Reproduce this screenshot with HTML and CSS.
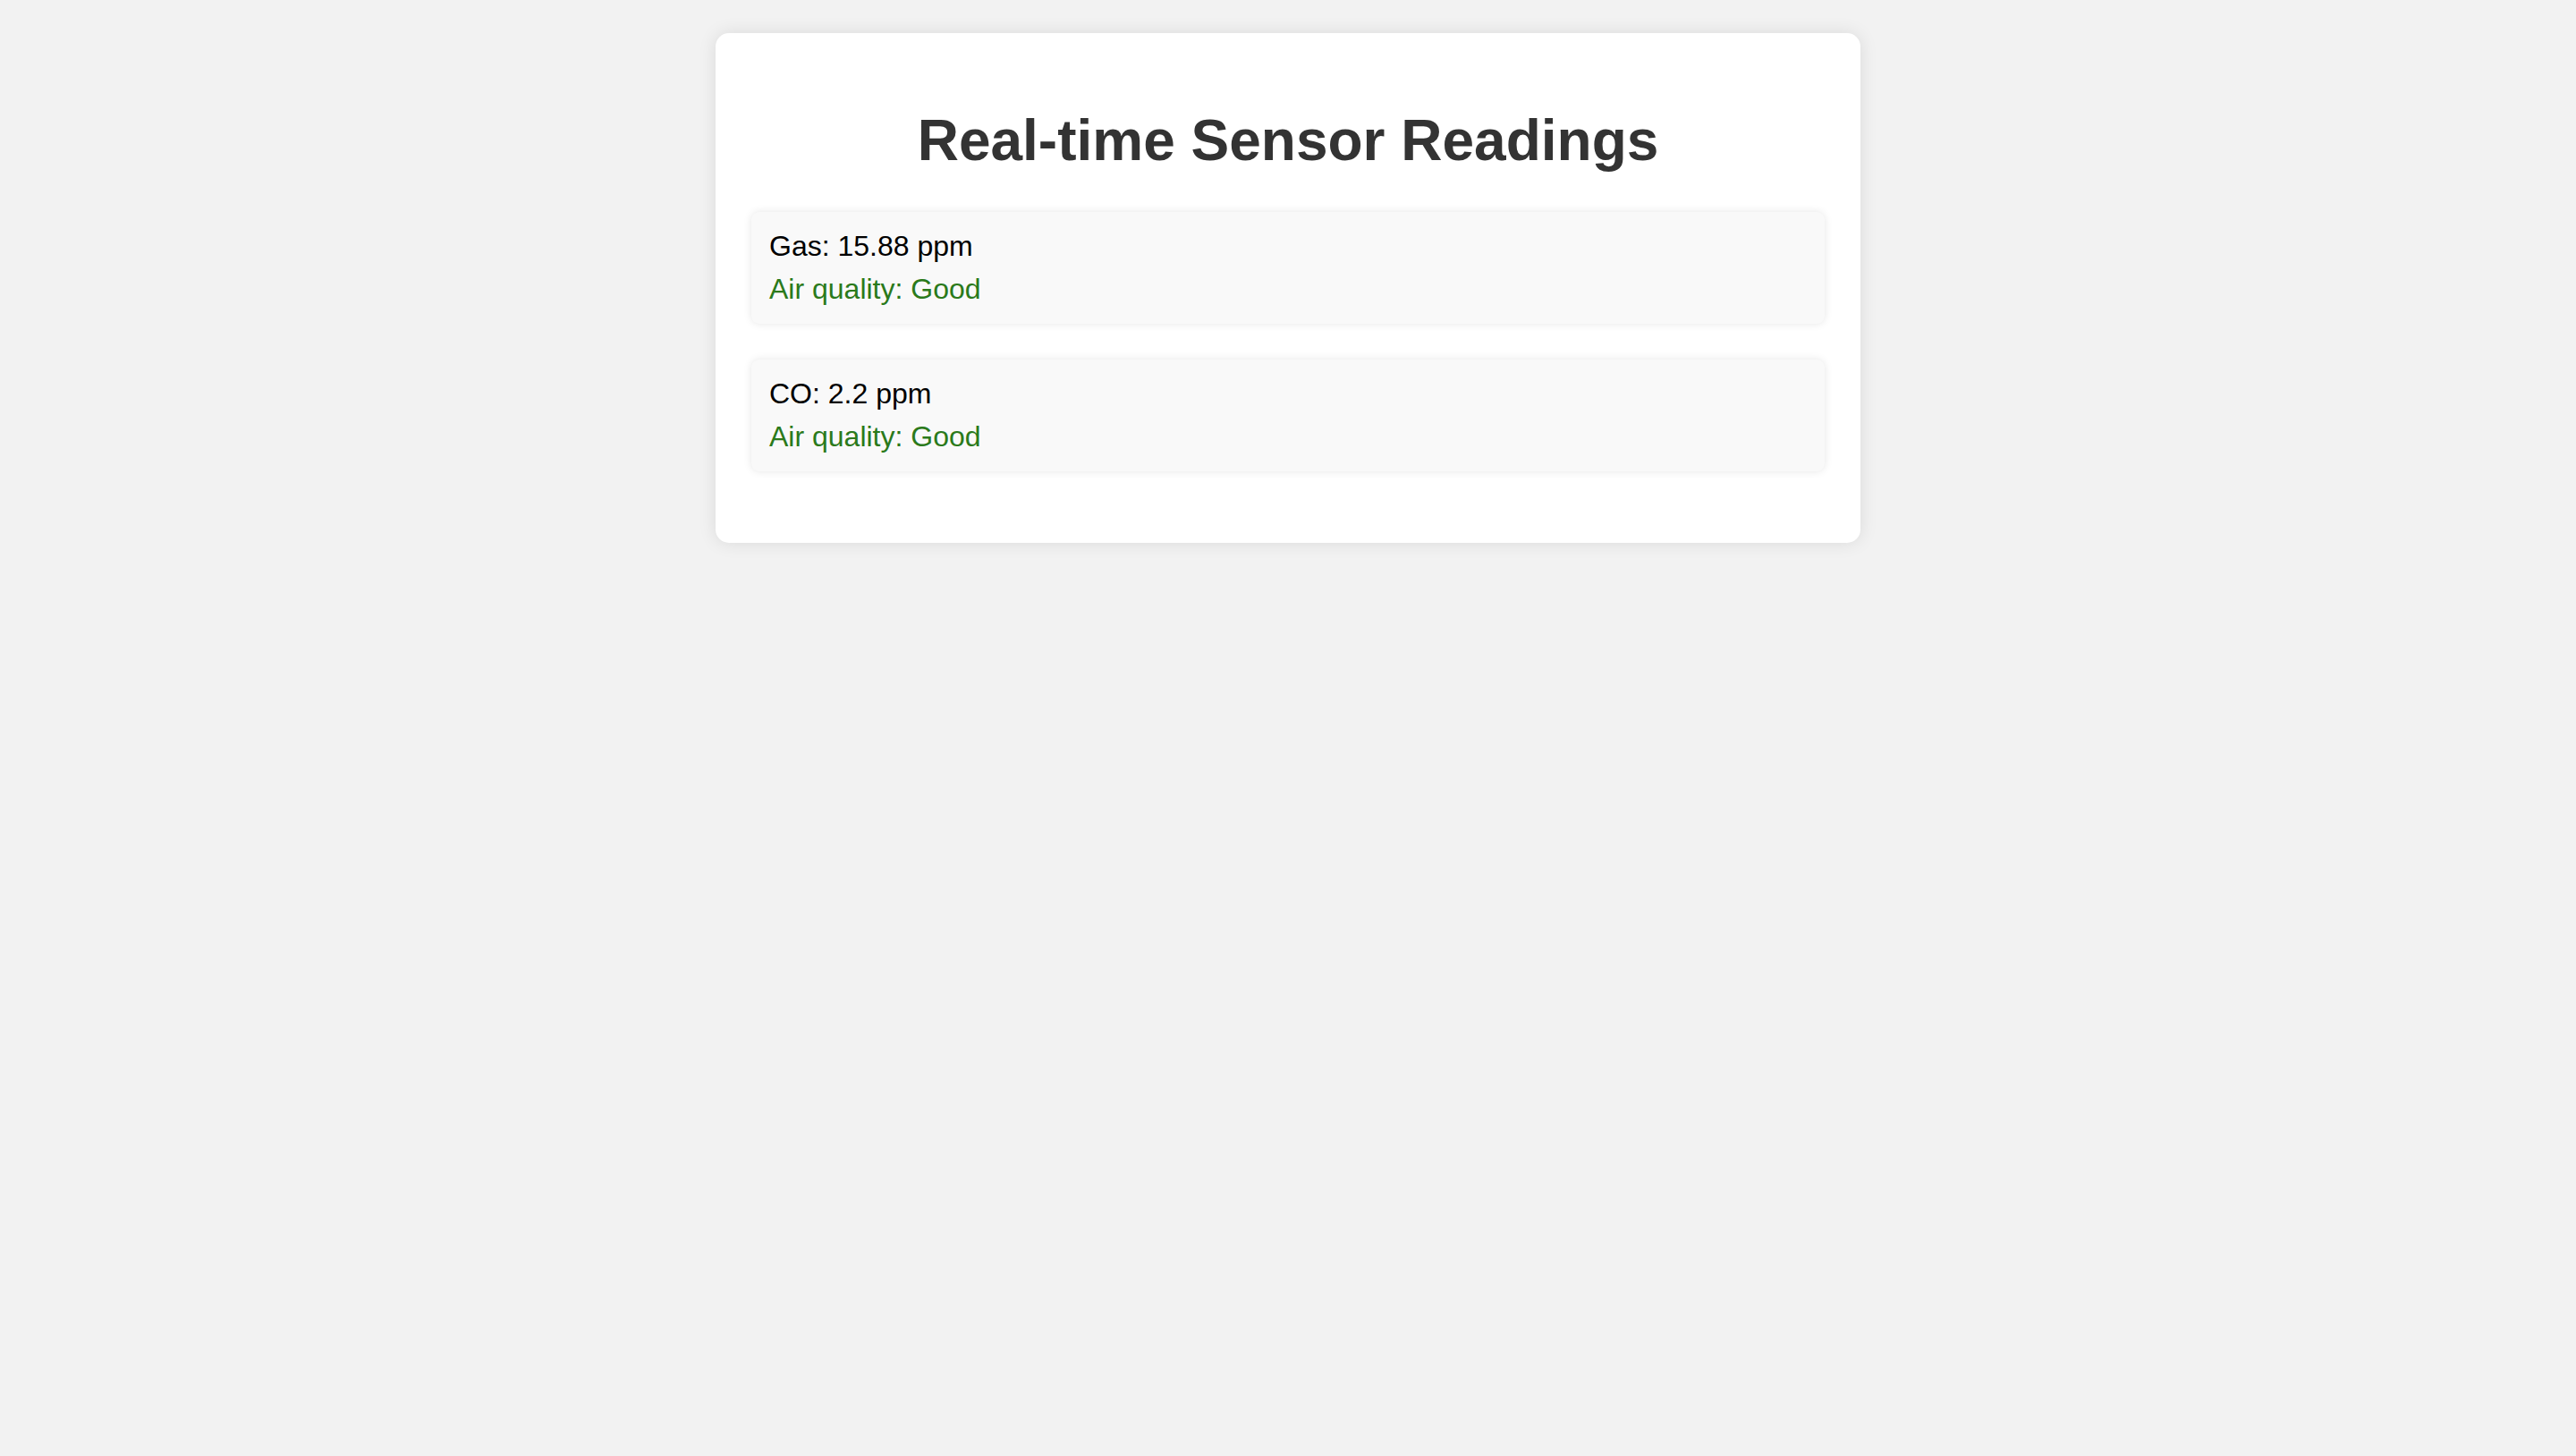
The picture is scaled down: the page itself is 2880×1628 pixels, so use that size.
FILE: index.html
```html
<!DOCTYPE html>
<html lang="en">
<head>
<meta charset="utf-8">
<title>Real-time Sensor Readings</title>
<link rel="stylesheet" href="styles.css">
</head>
<body>
  <main class="card">
    <h1 class="title">Real-time Sensor Readings</h1>
    <section class="reading">
      <p class="value">Gas: 15.88 ppm</p>
      <p class="quality good">Air quality: Good</p>
    </section>
    <section class="reading">
      <p class="value">CO: 2.2 ppm</p>
      <p class="quality good">Air quality: Good</p>
    </section>
  </main>
</body>
</html>
```

FILE: styles.css
```css
html, body {
  margin: 0;
  padding: 0;
}
body {
  background: #f2f2f2;
  font-family: "Liberation Sans", Arial, sans-serif;
  padding-top: 37px;
  min-height: 1628px;
  box-sizing: border-box;
}
.card {
  display: block;
  width: 1200px;
  margin: 0 auto;
  padding: 40px;
  background: #ffffff;
  border-radius: 15px;
  box-shadow: 0 0 20px rgba(0, 0, 0, 0.1);
}
.title {
  margin: 43px 0 43px;
  font-size: 64px;
  line-height: 74px;
  font-weight: bold;
  text-align: center;
  color: #333333;
}
.reading {
  background: #f9f9f9;
  border-radius: 9px;
  padding: 20px;
  margin-bottom: 40px;
  box-shadow: 0 0 10px rgba(0, 0, 0, 0.1);
}
.value, .quality {
  margin: 0;
  font-size: 32px;
  line-height: 37px;
}
.value {
  color: #000000;
}
.quality {
  margin-top: 11px;
}
.good {
  color: #2b7a1b;
}
```
